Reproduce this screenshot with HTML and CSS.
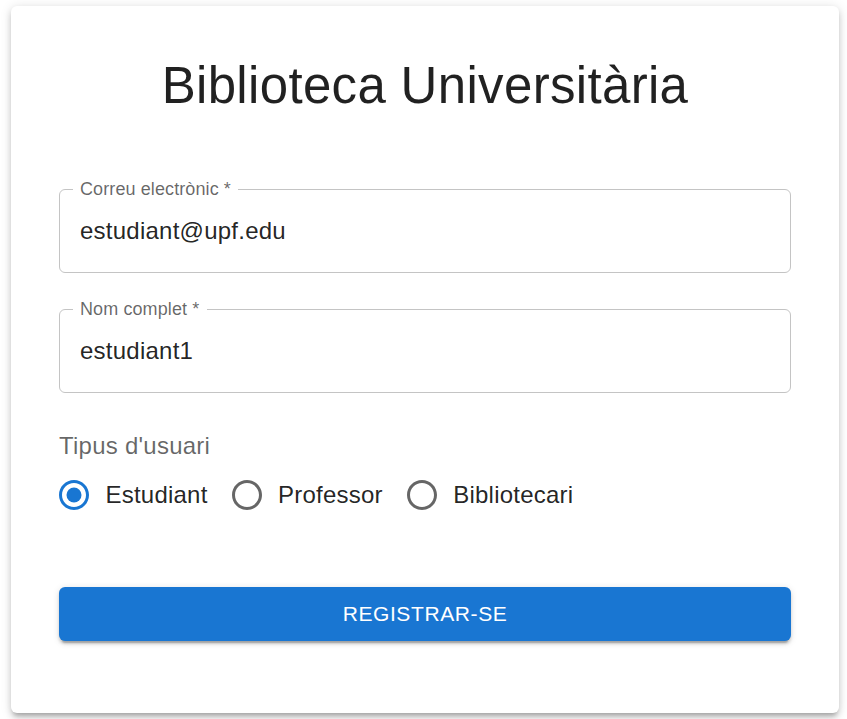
FILE: index.html
```html
<!DOCTYPE html>
<html lang="ca">
<head>
<meta charset="utf-8">
<title>Biblioteca Universitària</title>
<link rel="stylesheet" href="styles.css">
</head>
<body>
  <main class="card">
    <h1 class="title">Biblioteca Universitària</h1>
    <form class="form">
      <fieldset class="field field-first">
        <legend class="field-label">Correu electrònic *</legend>
        <div class="field-value">estudiant@upf.edu</div>
      </fieldset>
      <fieldset class="field field-second">
        <legend class="field-label">Nom complet *</legend>
        <div class="field-value">estudiant1</div>
      </fieldset>
      <div class="group">
        <div class="group-label">Tipus d'usuari</div>
        <div class="radios">
          <label class="radio-item">
            <span class="radio checked">
              <svg viewBox="0 0 24 24" width="36" height="36"><path d="M12 2C6.48 2 2 6.48 2 12s4.48 10 10 10 10-4.48 10-10S17.52 2 12 2zm0 18c-4.42 0-8-3.58-8-8s3.58-8 8-8 8 3.58 8 8-3.58 8-8 8z"/><circle cx="12" cy="12" r="5"/></svg>
            </span>
            <span class="radio-text">Estudiant</span>
          </label>
          <label class="radio-item">
            <span class="radio">
              <svg viewBox="0 0 24 24" width="36" height="36"><path d="M12 2C6.48 2 2 6.48 2 12s4.48 10 10 10 10-4.48 10-10S17.52 2 12 2zm0 18c-4.42 0-8-3.58-8-8s3.58-8 8-8 8 3.58 8 8-3.58 8-8 8z"/></svg>
            </span>
            <span class="radio-text">Professor</span>
          </label>
          <label class="radio-item">
            <span class="radio">
              <svg viewBox="0 0 24 24" width="36" height="36"><path d="M12 2C6.48 2 2 6.48 2 12s4.48 10 10 10 10-4.48 10-10S17.52 2 12 2zm0 18c-4.42 0-8-3.58-8-8s3.58-8 8-8 8 3.58 8 8-3.58 8-8 8z"/></svg>
            </span>
            <span class="radio-text">Bibliotecari</span>
          </label>
        </div>
      </div>
      <button type="button" class="submit">Registrar-se</button>
    </form>
  </main>
</body>
</html>
```
FILE: styles.css
```css
html, body {
  margin: 0;
  padding: 0;
  background: #ffffff;
}
body {
  font-family: "Liberation Sans", Arial, sans-serif;
  color: rgba(0, 0, 0, 0.87);
  padding: 6px 8px 6px 11px;
}
.card {
  background: #fff;
  border-radius: 6px;
  box-shadow: 0 4.5px 4.5px -3px rgba(0,0,0,0.2), 0 4.5px 6px 0 rgba(0,0,0,0.14), 0 1.5px 12px 0 rgba(0,0,0,0.12);
  padding: 48px 48px 72px;
}
.title {
  margin: 0 0 59px;
  font-size: 51px;
  line-height: 63px;
  font-weight: 400;
  letter-spacing: 0.33px;
  text-align: center;
  color: rgba(0, 0, 0, 0.87);
}
.form {
  display: flex;
  flex-direction: column;
}
.field {
  margin: 0;
  min-width: 0;
  border: 1px solid #c4c4c4;
  border-radius: 6px;
  padding: 12px 20px 23.5px;
}
.field-second {
  margin-top: 23px;
}
.field-label {
  padding: 0 7.5px;
  margin-left: -7.5px;
  font-size: 18px;
  line-height: 26px;
  letter-spacing: 0.1px;
  color: rgba(0, 0, 0, 0.6);
}
.field-value {
  font-size: 24px;
  line-height: 34.5px;
  letter-spacing: 0.24px;
  color: rgba(0, 0, 0, 0.87);
}
.group {
  margin-top: 36px;
}
.group-label {
  font-size: 24px;
  line-height: 34.5px;
  letter-spacing: 0.24px;
  color: rgba(0, 0, 0, 0.6);
}
.radios {
  display: flex;
  flex-wrap: wrap;
}
.radio-item {
  display: inline-flex;
  align-items: center;
  margin-left: -16.5px;
  margin-right: 24px;
  cursor: pointer;
}
.radio {
  display: inline-flex;
  padding: 13.5px;
  fill: rgba(0, 0, 0, 0.6);
}
.radio.checked {
  fill: #1976d2;
}
.radio svg {
  display: block;
}
.radio-text {
  font-size: 24px;
  line-height: 36px;
  letter-spacing: 0.22px;
  color: rgba(0, 0, 0, 0.87);
}
.submit {
  margin-top: 60px;
  border: 0;
  border-radius: 6px;
  background: #1976d2;
  color: #fff;
  font-family: "Liberation Sans", Arial, sans-serif;
  font-size: 21px;
  font-weight: 500;
  line-height: 36.75px;
  letter-spacing: 0.6px;
  text-transform: uppercase;
  padding: 9px 24px;
  box-shadow: 0 4.5px 1.5px -3px rgba(0,0,0,0.2), 0 3px 3px 0 rgba(0,0,0,0.14), 0 1.5px 7.5px 0 rgba(0,0,0,0.12);
  cursor: pointer;
}
```
